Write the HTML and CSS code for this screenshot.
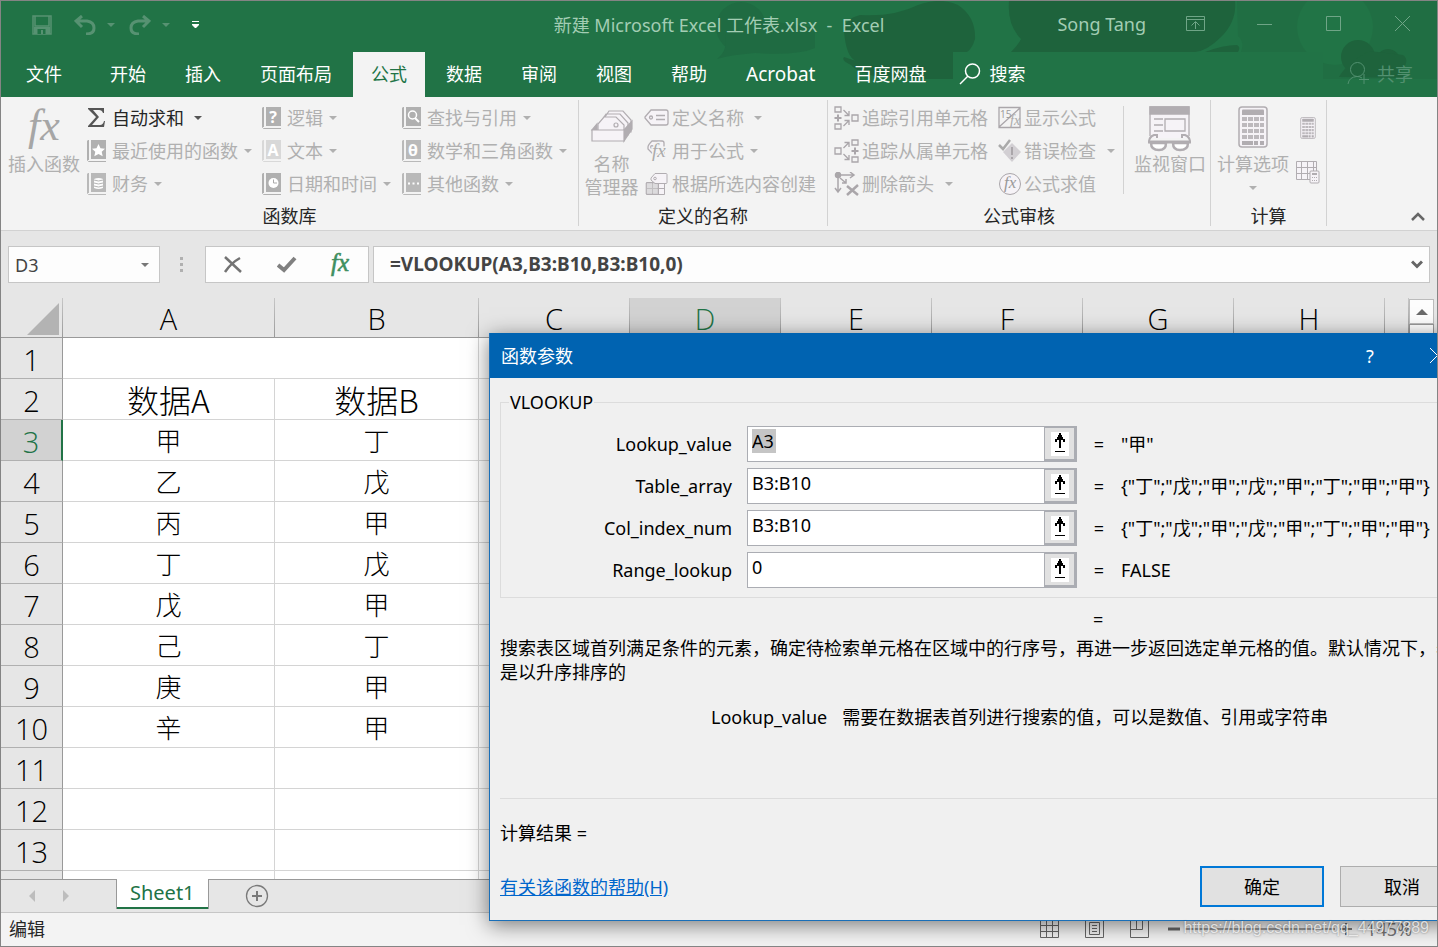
FILE: index.html
```html
<!DOCTYPE html>
<html lang="zh-CN">
<head>
<meta charset="utf-8">
<title>新建 Microsoft Excel 工作表.xlsx - Excel</title>
<link rel="stylesheet" href="styles.css">
</head>
<body>
<svg class="defs" aria-hidden="true">
  <symbol id="book" viewBox="0 0 20 22"><path d="M1 0h1v20H0V1zM4 0H19V19H4z" fill="currentColor"/><path d="M0.500 19v1.500l1 1H19" fill="none" stroke="currentColor"/></symbol>
  <symbol id="pick" viewBox="0 0 18 24"><path d="M0 0h18v24H0z" fill="#fff"/><path d="M8 1h2v2h1v2h1v2h2v3h-2V8h-2v8H8V8H6v2H4V7h2V5h1V3h1zM4 19h10v1H4z" fill="#000"/></symbol>
  <symbol id="calc" viewBox="0 0 30 42"><rect x="1" y="1" width="28" height="40" rx="3" fill="#f6f3f7" stroke="#b1adb1" stroke-width="1.500"/><path d="M4 4.500q0-1 1-1h20q1 0 1 1v4.500H4z" fill="#b1adb1"/><path d="M4 13h22M4 19h22M4 25h22M4 31h22" stroke="#bdb9bd" stroke-width="4" stroke-dasharray="5 1"/><path d="M4 37h11M16 37h4M22 37h4" stroke="#b1adb1" stroke-width="4"/></symbol>
</svg>
<div class="window">
  <header class="head">
    <svg class="pattern" viewBox="0 0 800 78" aria-hidden="true">
      <g fill="#1f6b42"><circle cx="104" cy="26" r="25"/><path d="M80 58q12-9 8-26l40-12q24 2 50 7v20q-18 8-60 5-26 2-38 6z"/></g>
      <g fill="#1e633c"><path d="M219 60q-10-4-12-30 0-12 16-16 34 2 58-10 22-8 40 0 18 12 17 34-3 10-8 13h-14v27h-60q-34-4-42-14-10-4-7-8z"/><path d="M372 0h226q2 20-14 36-14 14-26 15H374q8-8 10-13-14-14-12-38z"/><path d="M568 51q18-7 32-7 4 2 1 7z"/></g>
      <path d="M600 0h200v78H686V51H604q4-10-3-16z" fill="#206e43"/>
      <circle cx="698" cy="26" r="38" fill="#217446"/>
      <g fill="#1e633c"><circle cx="721" cy="56" r="17"/><circle cx="751" cy="60" r="12"/><path d="M702 76q7-13 30-26l34 4q8 6-3 17l6 6z"/></g>
      <path d="M317 51H686V78H317z" fill="#217346"/>
    </svg>
    <div class="titlebar">
      <div class="quick">
        <button aria-label="保存"><svg width="20" height="20" viewBox="0 0 20 20" fill="none" stroke="currentColor" stroke-width="1.500"><path d="M1 1h18v18H1zM3 1v10h14V1"/><path d="M2 12h16v7H2z" fill="currentColor" stroke="none"/><path d="M5.500 14h8v5h-8z" fill="#217346" stroke="none"/><path d="M9 15h2v4H9z" fill="currentColor" stroke="none"/></svg></button>
        <button aria-label="撤消"><svg width="22" height="20" viewBox="0 0 22 20" fill="none" stroke="currentColor" stroke-width="3"><path d="M8 1L2 6l6 6M2 6h11q7 1 7 7t-8 6"/></svg></button>
        <button aria-label="撤消选项"><i class="caret"></i></button>
        <button aria-label="恢复"><svg width="22" height="20" viewBox="0 0 22 20" fill="none" stroke="currentColor" stroke-width="3"><path d="M14 1l6 5-6 6M20 6H9q-7 1-7 7t8 6"/></svg></button>
        <button aria-label="恢复选项"><i class="caret"></i></button>
        <button class="bright" aria-label="自定义快速访问工具栏"><svg width="8" height="8" viewBox="0 0 8 8" fill="currentColor"><path d="M0 0h7v1H0zM0 3h7v1L4 7H3L0 4z"/></svg></button>
      </div>
      <h1 class="doc">新建 Microsoft Excel 工作表.xlsx&nbsp; -&nbsp; Excel</h1>
      <div class="winctl">
        <span class="user">Song Tang</span>
        <button aria-label="功能区显示选项"><svg width="20" height="16" viewBox="0 0 20 16" fill="none" stroke="currentColor"><path d="M.5.5h18v14H.500zM.5 3.500h18M9.500 13V6M5.500 9.500l4-4 4 4"/></svg></button>
        <button aria-label="最小化"><svg width="16" height="16" viewBox="0 0 16 16" stroke="currentColor"><path d="M0 8.500h15"/></svg></button>
        <button aria-label="最大化"><svg width="16" height="16" viewBox="0 0 16 16" fill="none" stroke="currentColor"><path d="M.5.5h14v14H.500z"/></svg></button>
        <button aria-label="关闭"><svg width="16" height="16" viewBox="0 0 16 16" stroke="currentColor"><path d="M0 0l15 15M15 0L0 15"/></svg></button>
      </div>
    </div>
    <nav class="tabs">
      <button class="file">文件</button><button>开始</button><button>插入</button><button>页面布局</button><button class="active">公式</button><button>数据</button><button>审阅</button><button>视图</button><button>帮助</button><button class="latin">Acrobat</button><button>百度网盘</button>
      <button class="search"><svg width="22" height="22" viewBox="0 0 22 22" fill="none" stroke="currentColor" stroke-width="1.500"><circle cx="13.500" cy="8" r="7"/><path d="M9 13l-8 8"/></svg>搜索</button>
      <button class="share"><svg width="23" height="23" viewBox="0 0 23 23" fill="none" stroke="currentColor"><circle cx="10.500" cy="7.500" r="7"/><path d="M1 22q1-7 9-7.500 3 0 5 1.500M17 12v10M12 17.500h10"/></svg>共享</button>
    </nav>
  </header>

  <section class="ribbon">
    <div class="group">
      <div class="tools library">
        <button class="big"><svg width="52" height="44" viewBox="0 0 52 44" fill="#a6a6a6"><text class="fx" x="10" y="34" font-size="44">fx</text></svg>插入函数</button>
        <div class="stack">
          <button class="on"><svg width="20" height="22" viewBox="0 0 20 22"><path d="M1 1h16v5h-1q-1-3-4-3H6l6 7-7 8h8q3 0 4-4h1l-1 6H1v-1l8-9-8-8z" fill="#555"/></svg>自动求和<i class="caret far"></i></button>
          <button><svg width="20" height="22"><use href="#book"/><path d="M11.500 4l2 4.200 4.500.500-3.300 3 1 4.500-4.200-2.300-4.200 2.300 1-4.500-3.300-3 4.500-.500z" fill="#fff"/></svg>最近使用的函数<i class="caret"></i></button>
          <button><svg width="20" height="22" opacity=".85"><use href="#book"/><path d="M7 6q4.500-2 9 0v9q-4.500 2-9 0z" fill="#fff"/><path d="M7 7q4.500 2 9 0M7 10q4.500 2 9 0M7 13q4.500 2 9 0" stroke="#aaa" fill="none"/></svg>财务<i class="caret"></i></button>
        </div>
        <div class="stack">
          <button><svg width="20" height="22"><use href="#book"/><text class="mark" x="11" y="16">?</text></svg>逻辑<i class="caret"></i></button>
          <button><svg width="20" height="22"><g opacity=".4"><use href="#book"/></g><text class="mark" x="11" y="16">A</text></svg>文本<i class="caret"></i></button>
          <button><svg width="20" height="22"><use href="#book"/><circle cx="11.500" cy="10" r="5" fill="#fff"/><path d="M11.500 6.500V10H15" stroke="#aaa" fill="none"/></svg>日期和时间<i class="caret"></i></button>
        </div>
        <div class="stack">
          <button><svg width="20" height="22"><use href="#book"/><circle cx="10.500" cy="8" r="4" fill="none" stroke="#fff" stroke-width="1.500"/><path d="M13 11l4 4" stroke="#fff" stroke-width="2"/></svg>查找与引用<i class="caret"></i></button>
          <button><svg width="20" height="22" opacity=".85"><use href="#book"/><text class="mark" x="11" y="16">θ</text></svg>数学和三角函数<i class="caret"></i></button>
          <button><svg width="20" height="22" opacity=".85"><use href="#book"/><path d="M6 10.500h2M10.500 10.500h2M15 10.500h2" stroke="#fff" stroke-width="2"/></svg>其他函数<i class="caret"></i></button>
        </div>
      </div>
      <div class="label">函数库</div>
    </div>

    <div class="group">
      <div class="tools names">
        <button class="big manager"><svg width="44" height="44" viewBox="0 0 44 44" fill="#f6f3f7" stroke="#b1adb1" stroke-width="1.200"><path d="M15 11l4-6h14l8 9v12H15zM12 14l4-6h14l8 9v12H12z"/><path d="M8 24V18l6-7h12l8 8v8H8z"/><circle cx="26" cy="19" r="2"/><path d="M2 24l5-6v6zM34 24l8-9v8l-8 12z" fill="#b1adb1"/><path d="M2 24h32v11H2z"/></svg><span>名称<br>管理器</span></button>
        <div class="stack">
          <button><svg width="26" height="22" viewBox="0 0 26 22" fill="#f6f3f7" stroke="#b1adb1" stroke-width="1.300"><path d="M1 10l6-7h15q2 0 2 2v11q0 2-2 2H7l-6-7z"/><circle cx="7" cy="10.500" r="1.500"/><path d="M12 8.500h9M12 12.500h9"/></svg>定义名称<i class="caret far"></i></button>
          <button><svg width="26" height="22" viewBox="0 0 26 22" fill="#f6f3f7" stroke="#b1adb1" stroke-width="1.300"><path d="M4 7q0-2 4-6h10q2 0 2 2v11H9L4 9z"/><circle cx="8" cy="7" r="1.300"/><text class="fx" x="8" y="17" font-size="19" fill="#aaa" stroke="#f3f3f3" stroke-width="3" paint-order="stroke">fx</text></svg>用于公式<i class="caret"></i></button>
          <button><svg width="26" height="22" viewBox="0 0 26 22" fill="#f6f3f7" stroke="#b1adb1"><path d="M2.500 9.500h18v12h-18zM2.500 15.500h18M8.500 9.500v12M14.500 9.500v12"/><path d="M2 10h12v11H2z" opacity=".6" fill="#ccc"/><path d="M7 5l4-4.500h11q1 0 1 1v8q0 1-1 1H11L7 7z"/><circle cx="11" cy="5.500" r="1.300"/></svg>根据所选内容创建</button>
        </div>
      </div>
      <div class="label">定义的名称</div>
    </div>

    <div class="group">
      <div class="tools audit">
        <div class="stack">
          <button><svg width="26" height="24" viewBox="0 0 26 24" fill="none" stroke="#aaa6aa" stroke-width="1.300"><path d="M1 1h6v5H1zM1 18h6v5H1zM18 9h6v6h-6z"/><path d="M4 8.500v7M.5 12h7" stroke-width="2"/><path d="M9.500 4l5 5M15 5v4.500h-4.500M9.500 20l5-5M15 19v-4.500h-4.500"/></svg>追踪引用单元格</button>
          <button><svg width="26" height="24" viewBox="0 0 26 24" fill="none" stroke="#aaa6aa" stroke-width="1.300"><path d="M1 9h6v6H1zM18 1h6v5h-6zM18 18h6v5h-6z"/><path d="M21 8.500v7M17.500 12h7" stroke-width="2"/><path d="M9.500 9l5-5M15 8V3.500h-4.500M9.500 15l5 5M15 16v4.500h-4.500"/></svg>追踪从属单元格</button>
          <button><svg width="26" height="24" viewBox="0 0 26 24" fill="none" stroke="#aaa6aa" stroke-width="1.500"><circle cx="4" cy="3" r="2.500" fill="#aaa"/><path d="M4 3h15M16 0l4 3-4 3M4 3v16M1 16l3 4 3-4M6 6l6 5M12 7v4H8"/><path d="M13 14l11 9M24 13L13 23" stroke-width="2.500"/></svg>删除箭头<i class="caret wide"></i></button>
        </div>
        <div class="stack">
          <button><svg width="24" height="24" viewBox="0 0 24 24" fill="none" stroke="#aaa6aa" stroke-width="1.300"><path d="M1 1.500h21v20H1zM1 21L22 2"/><text x="2" y="12" class="tiny">15</text><text class="fx" x="12" y="19" font-size="14" fill="#aaa" stroke="none">fx</text></svg>显示公式</button>
          <button><svg width="24" height="24" viewBox="0 0 24 24"><path d="M5 13l9-9 9 9-9 10z" fill="#d2cfd3"/><path d="M14 8v8M14 18v2" stroke="#aaa6aa" stroke-width="2"/><path d="M1 6l4 4 7-9" fill="none" stroke="#aaa" stroke-width="2.500"/></svg>错误检查<i class="caret wide"></i></button>
          <button><svg width="24" height="24" viewBox="0 0 24 24" fill="#f6f3f7" stroke="#aaa6aa"><circle cx="12" cy="12" r="10.500"/><text class="fx" x="6" y="16" font-size="17" fill="#999" stroke="none">fx</text></svg>公式求值</button>
        </div>
        <button class="big watch"><svg width="46" height="46" viewBox="0 0 46 46" fill="none" stroke="#b1adb1" stroke-width="1.300"><path d="M3 1h39v31H3z" fill="#f6f3f7" stroke="none"/><path d="M3 30V1h39v29"/><path d="M3 1h39v7H3z" fill="#b1adb1"/><path d="M7 13h9M7 19h9M7 25h9M18 13h20v12H18z"/><path d="M2 36q0-5 5-7h3v3M43 36q0-5-5-7h-3v3" stroke-width="2"/><path d="M1 36h43" stroke-width="3"/><path d="M4 37h15q0 7-7 7-8 0-8-7zM26 37h15q0 7-8 7-7 0-7-7z" fill="#fff" stroke-width="2.500"/></svg>监视窗口</button>
      </div>
      <div class="label">公式审核</div>
    </div>

    <div class="group">
      <div class="tools calcs">
        <button class="big"><svg width="30" height="44" viewBox="0 0 30 44"><use href="#calc" width="30" height="42"/></svg>计算选项<i class="caret down"></i></button>
        <div class="minis">
          <button aria-label="开始计算"><svg width="16" height="22"><use href="#calc"/></svg></button>
          <button aria-label="计算工作表"><svg width="24" height="24" viewBox="0 0 24 24" fill="#f6f3f7" stroke="#b1adb1"><path d="M.5 1.500h20v18H.500zM.5 7.500h20M.5 13.500h20M5.500 1.500v18M11.500 1.500v18M17.500 1.500v18"/><rect x="14" y="11" width="9" height="12" rx="1"/><path d="M16 14h5" stroke-width="2"/><path d="M16 17.500h5M16 20.500h5" stroke-dasharray="1 1"/></svg></button>
        </div>
      </div>
      <div class="label">计算</div>
    </div>
    <button class="fold" aria-label="折叠功能区"><svg width="14" height="10" viewBox="0 0 14 10" fill="none" stroke="#666" stroke-width="2.500"><path d="M1 8l6-6 6 6"/></svg></button>
  </section>

  <section class="formula">
    <div class="namebox"><input aria-label="名称框" value="D3"><button aria-label="名称列表"><i class="caret"></i></button></div>
    <svg width="4" height="16" viewBox="0 0 4 16" fill="#b0b0b0"><path d="M0 0h3v3H0zM0 6h3v3H0zM0 12h3v3H0z"/></svg>
    <div class="fxbtns">
      <button aria-label="取消"><svg width="20" height="18" viewBox="0 0 20 18" fill="none" stroke="#737373" stroke-width="2.500"><path d="M2 1l16 15M17 2q-9 5-15 14"/></svg></button>
      <button aria-label="输入"><svg width="20" height="18" viewBox="0 0 20 18" fill="none" stroke="#808080" stroke-width="4"><path d="M1 9l6 5L18 2"/></svg></button>
      <button aria-label="插入函数"><svg width="28" height="28" viewBox="0 0 28 28"><text class="fx" x="4" y="20" font-size="25" fill="#3f8f61" stroke="#3f8f61" stroke-width=".6">fx</text></svg></button>
    </div>
    <div class="bar"><input aria-label="编辑栏" value="=VLOOKUP(A3,B3:B10,B3:B10,0)"><button aria-label="展开编辑栏"><svg width="12" height="9" viewBox="0 0 12 9" fill="none" stroke="#666" stroke-width="3"><path d="M1 1.500l5 5 5-5"/></svg></button></div>
  </section>

  <main class="book">
    <table class="sheet">
      <colgroup><col class="c-num"><col class="c-a"><col class="c-b"><col class="c-n"><col class="c-n"><col class="c-n"><col class="c-n"><col class="c-n"><col class="c-n"><col></colgroup>
      <thead><tr><th class="corner"><svg width="32" height="32" viewBox="0 0 32 32"><path d="M32 0v32H0z" fill="#b3b3b3"/></svg></th><th>A</th><th>B</th><th>C</th><th class="sel">D</th><th>E</th><th>F</th><th>G</th><th>H</th><th></th></tr></thead>
      <tbody>
        <tr><th>1</th><td colspan="2"></td><td></td><td></td><td></td><td></td><td></td><td></td><td></td></tr>
        <tr><th>2</th><td class="cap">数据A</td><td class="cap">数据B</td><td></td><td></td><td></td><td></td><td></td><td></td><td></td></tr>
        <tr><th class="sel">3</th><td>甲</td><td>丁</td><td></td><td></td><td></td><td></td><td></td><td></td><td></td></tr>
        <tr><th>4</th><td>乙</td><td>戊</td><td></td><td></td><td></td><td></td><td></td><td></td><td></td></tr>
        <tr><th>5</th><td>丙</td><td>甲</td><td></td><td></td><td></td><td></td><td></td><td></td><td></td></tr>
        <tr><th>6</th><td>丁</td><td>戊</td><td></td><td></td><td></td><td></td><td></td><td></td><td></td></tr>
        <tr><th>7</th><td>戊</td><td>甲</td><td></td><td></td><td></td><td></td><td></td><td></td><td></td></tr>
        <tr><th>8</th><td>己</td><td>丁</td><td></td><td></td><td></td><td></td><td></td><td></td><td></td></tr>
        <tr><th>9</th><td>庚</td><td>甲</td><td></td><td></td><td></td><td></td><td></td><td></td><td></td></tr>
        <tr><th>10</th><td>辛</td><td>甲</td><td></td><td></td><td></td><td></td><td></td><td></td><td></td></tr>
        <tr><th>11</th><td></td><td></td><td></td><td></td><td></td><td></td><td></td><td></td><td></td></tr>
        <tr><th>12</th><td></td><td></td><td></td><td></td><td></td><td></td><td></td><td></td><td></td></tr>
        <tr><th>13</th><td></td><td></td><td></td><td></td><td></td><td></td><td></td><td></td><td></td></tr>
        <tr><th></th><td></td><td></td><td></td><td></td><td></td><td></td><td></td><td></td><td></td></tr>
      </tbody>
    </table>
    <div class="vscroll"><button aria-label="向上滚动"><svg width="12" height="6" viewBox="0 0 12 6"><path d="M6 0l6 6H0z" fill="#6a6a6a"/></svg></button><div class="thumb"></div></div>
  </main>

  <div class="sheets">
    <button class="arrow" aria-label="上一个"><svg width="6" height="12" viewBox="0 0 6 12"><path d="M6 0v12L0 6z" fill="#bdbdbd"/></svg></button>
    <button class="arrow" aria-label="下一个"><svg width="6" height="12" viewBox="0 0 6 12"><path d="M0 0v12l6-6z" fill="#bdbdbd"/></svg></button>
    <button class="sheettab">Sheet1</button>
    <button class="add" aria-label="新工作表"><svg width="24" height="24" viewBox="0 0 24 24" fill="none" stroke="#7a7a7a"><circle cx="12" cy="12" r="10.500" stroke-width="1.300"/><path d="M12 7v10M7 12h10" stroke-width="2"/></svg></button>
  </div>

  <footer class="status">
    <span>编辑</span>
    <div class="views">
      <button aria-label="普通"><svg width="19" height="19" viewBox="0 0 19 19" fill="none" stroke="#666"><path d="M.5.5h18v18H.500zM.5 6.500h18M.5 12.500h18M6.500.5v18M12.500.5v18"/></svg></button>
      <button aria-label="页面布局"><svg width="19" height="19" viewBox="0 0 19 19" fill="none" stroke="#666"><path d="M.5.5h18v18H.500zM4.500 3.500h10v12h-10zM7 6.500h5M7 9.500h5M7 12.500h5"/></svg></button>
      <button aria-label="分页预览"><svg width="19" height="19" viewBox="0 0 19 19" fill="none" stroke="#666"><path d="M.5.5h18v18H.500zM.5 10.500h12v-10M6.500.5v10"/></svg></button>
    </div>
    <div class="zoom"><button aria-label="缩小"><svg width="12" height="12"><path d="M0 6h12" stroke="#666" stroke-width="3"/></svg></button><input type="range" aria-label="缩放" min="10" max="400" value="145"><button aria-label="放大"><svg width="12" height="12"><path d="M0 6h12M6 0v12" stroke="#777" stroke-width="2"/></svg></button><span>145%</span></div>
  </footer>

  <div class="dialog" role="dialog" aria-labelledby="dlg">
    <div class="dtitle"><h2 id="dlg">函数参数</h2><button aria-label="帮助">?</button><button aria-label="关闭"><svg width="16" height="16" viewBox="0 0 16 16" stroke="#fff"><path d="M0 0l15 15M15 0L0 15"/></svg></button></div>
    <div class="dbody">
      <fieldset>
        <legend>VLOOKUP</legend>
        <div class="field"><label for="f1">Lookup_value</label><div class="ref"><input id="f1" class="marked" value="A3"><button aria-label="选择区域"><svg width="18" height="24"><use href="#pick"/></svg></button></div><span>=</span><output>"甲"</output></div>
        <div class="field"><label for="f2">Table_array</label><div class="ref"><input id="f2" value="B3:B10"><button aria-label="选择区域"><svg width="18" height="24"><use href="#pick"/></svg></button></div><span>=</span><output>{"丁";"戊";"甲";"戊";"甲";"丁";"甲";"甲"}</output></div>
        <div class="field"><label for="f3">Col_index_num</label><div class="ref"><input id="f3" value="B3:B10"><button aria-label="选择区域"><svg width="18" height="24"><use href="#pick"/></svg></button></div><span>=</span><output>{"丁";"戊";"甲";"戊";"甲";"丁";"甲";"甲"}</output></div>
        <div class="field"><label for="f4">Range_lookup</label><div class="ref"><input id="f4" value="0"><button aria-label="选择区域"><svg width="18" height="24"><use href="#pick"/></svg></button></div><span>=</span><output>FALSE</output></div>
      </fieldset>
      <div class="eq">=</div>
      <p class="desc">搜索表区域首列满足条件的元素，确定待检索单元格在区域中的行序号，再进一步返回选定单元格的值。默认情况下，表是以升序排序的</p>
      <div class="arg"><span>Lookup_value</span><span>需要在数据表首列进行搜索的值，可以是数值、引用或字符串</span></div>
      <div class="result">计算结果 =</div>
      <div class="actions"><a href="#help">有关该函数的帮助(H)</a><button class="ok">确定</button><button>取消</button></div>
    </div>
  </div>
  <div class="watermark">https://blog.csdn.net/qq_44977889</div>
</div>
</body>
</html>
```

FILE: styles.css
```css
* { box-sizing: border-box; }
body { margin: 0; font: 18px/24px "Noto Sans", "Noto Sans CJK SC", sans-serif; color: #262626; }
button, input { font: inherit; color: inherit; border: 0; padding: 0; margin: 0; background: none; border-radius: 0; outline: 0; }
button { display: flex; align-items: center; white-space: nowrap; }
h1, h2, p { margin: 0; font-size: 18px; font-weight: 400; }
svg { display: block; flex: none; }
.defs { position: absolute; width: 0; height: 0; }
.fx { font-family: "Liberation Serif", serif; font-style: italic; }
.mark { font: bold 16px "Open Sans", sans-serif; fill: #fff; text-anchor: middle; }
.tiny { font: 10px "Open Sans", sans-serif; fill: #999; stroke: none; }
.caret { flex: none; border: 4px solid transparent; border-top-color: currentColor; border-bottom: 0; margin-left: 6px; }

.window { position: relative; display: flex; flex-direction: column; height: 100vh; overflow: hidden; border: 1px solid #848484; background: #e6e6e6; }

.head { position: relative; background: #217346; color: #fff; }
.pattern { position: absolute; right: 0; top: 0; width: 800px; height: 78px; }
.titlebar { position: relative; display: grid; grid-template-columns: 1fr auto 1fr; align-items: center; height: 51px; padding-bottom: 4px; }
.quick { display: flex; align-items: center; padding-left: 31px; color: #579272; }
.quick button + button { margin-left: 22px; }
.quick button:nth-child(3), .quick button:nth-child(5) { margin-left: 5px; }
.quick button:nth-child(4) { margin-left: 14px; }
.quick .bright { color: #fff; }
.doc { color: #a3cdb4; white-space: nowrap; }
.winctl { display: flex; justify-content: flex-end; padding-bottom: 2px; color: #6fa587; }
.winctl button { width: 69px; height: 44px; justify-content: center; }
.user { align-self: center; margin-right: 15px; color: #a3cdb4; }
.tabs { position: relative; display: flex; gap: 3px; height: 45px; }
.tabs button { padding: 0 18px 2px; }
.tabs .file { padding: 0 27px 2px 25px; }
.tabs .active { background: #f3f3f3; color: #217346; }
.tabs .latin { font-size: 19px; }
.tabs .search { padding: 0 12px 2px; gap: 8px; }
.tabs .share { margin-left: auto; padding: 0 24px 2px; gap: 7px; color: #529170; }

.ribbon { display: flex; background: #f3f3f3; border-bottom: 1px solid #d2d2d2; color: #b0b0b0; }
.group { padding-top: 4px; border-right: 1px solid; border-image: linear-gradient(#f3f3f3 4px, #d2d2d2 4px, #d2d2d2 128px, #f3f3f3 128px) 1; }
.tools { display: grid; height: 99px; }
.library { grid-template-columns: 86px 175px 140px 176px; }
.names { grid-template-columns: 65px 183px; }
.audit { grid-template-columns: 164px 125px 87px; padding-left: 6px; }
.calcs { grid-template-columns: 84px 31px; }
.stack { display: grid; grid-template-rows: repeat(3, 33px); }
.stack button { gap: 5px; }
.stack .caret { margin-left: 1px; }
.stack .far { margin-left: 5px; }
.names .stack button { gap: 2px; }
.names .stack .caret { margin-left: 4px; }
.names .stack .far { margin-left: 8px; }
.audit .stack button { gap: 2px; }
.audit .stack .wide { margin-left: 9px; }
.stack .on { color: #262626; }
.stack .on .caret { color: #555; }
.big { flex-direction: column; justify-content: flex-start; padding-top: 5px; gap: 2px; }
.manager { gap: 3px; line-height: 23px; }
.audit .watch { height: 88px; margin-top: 5px; padding: 0 0 0 6px; gap: 0; border-left: 1px solid #d2d2d2; }
.down { margin: 8px 0 0; }
.minis { display: flex; flex-direction: column; align-items: center; gap: 21px; padding: 16px 6px 0 0; }
.label { height: 30px; line-height: 32px; text-align: center; color: #262626; }
.fold { align-self: flex-end; margin: 0 12px 8px auto; }

.formula { display: flex; align-items: center; height: 67px; padding: 0 7px; color: #444; }
.namebox, .fxbtns, .bar { display: flex; height: 37px; background: #fdfdfd; border: 1px solid #c6c6c6; }
.namebox { width: 152px; margin-right: 20px; }
.namebox input { flex: 1; min-width: 0; padding-left: 6px; }
.namebox button { padding-right: 10px; color: #777; }
.fxbtns { width: 164px; margin: 0 4px 0 21px; }
.fxbtns button { flex: 1; justify-content: center; }
.bar { flex: 1; }
.bar input { flex: 1; padding: 0 0 2px 16px; font-size: 19px; font-weight: 700; }
.bar button { padding-right: 6px; }

.book { flex: 1; display: flex; min-height: 0; overflow: hidden; }
.sheet { flex: 1; width: 0; table-layout: fixed; border-collapse: separate; border-spacing: 0; align-self: flex-start; }
.c-num { width: 62px; }
.c-a { width: 212px; }
.c-b { width: 204px; }
.c-n { width: 151px; }
.sheet th { height: 41px; padding: 3px 0 0; font: 350 29px/37px "Open Sans", sans-serif; color: #000; background: #e6e6e6; border-right: 1px solid #b5b5b5; border-bottom: 1px solid #999; }
.sheet thead th { height: 40px; line-height: 36px; border-image: linear-gradient(#c8c8c8, #999) 1; }
.sheet tbody th { border-right-color: #999; border-bottom-color: #b0b0b0; }
.sheet .corner svg { margin: 0 3px 0 auto; }
.sheet th.sel { background: #d2d2d2; color: #217346; }
.sheet tbody th.sel { border-right: 2px solid #217346; }
.sheet td { height: 41px; padding: 0; font: 300 26px/40px "Noto Sans CJK SC", sans-serif; color: #000; text-align: center; background: #fff; border-right: 1px solid #d4d4d4; border-bottom: 1px solid #d4d4d4; }
.sheet .cap { font-size: 32px; }
.vscroll { width: 28px; padding: 1px 3px 0 0; }
.vscroll button { width: 25px; height: 25px; justify-content: center; background: #fdfdfd; border: 1px solid #bbb; }
.thumb { width: 25px; height: 200px; background: #fff; border: 1px solid #999; }

.sheets { display: flex; height: 34px; border-top: 1px solid #999; border-bottom: 1px solid #c6c6c6; align-items: center; }
.arrow { margin-left: 28px; }
.sheettab { align-self: flex-start; height: 30px; margin: -1px 36px 0 47px; padding: 0 13px 3px; background: #fff; color: #217346; border: solid #999; border-width: 0 1px; box-shadow: inset 0 -2px #217346; font-size: 20px; }
.status { display: flex; align-items: center; height: 33px; padding: 0 25px 2px 8px; background: #f3f3f3; }
.views { display: flex; gap: 26px; margin-left: auto; }
.zoom { display: flex; align-items: center; margin-left: 19px; color: #777; }
.zoom input { appearance: none; width: 150px; height: 2px; margin: 0 5px; background: #999; }
.zoom input::-webkit-slider-thumb { appearance: none; width: 1px; height: 2px; background: #999; }
.zoom span { margin-left: 14px; }

.dialog { position: absolute; left: 488px; top: 332px; width: 988px; background: #f0f0f0; color: #000; border: 1px solid #1a6fb8; border-top: 0; box-shadow: 0 4px 20px rgba(0, 0, 0, .5); }
.dtitle { display: flex; align-items: center; height: 45px; padding: 0 4px 0 11px; background: #0063b1; color: #fff; }
.dtitle button { width: 68px; height: 45px; justify-content: center; }
.dtitle h2 { margin-right: auto; }
.dbody { padding: 12px 12px 13px 10px; }
fieldset { min-width: 0; margin: 0; padding: 12px 0 9px; border: 1px solid #dcdcdc; }
legend { margin-left: 8px; padding: 0 1px; }
.field { display: grid; grid-template-columns: 231px 330px 14px 1fr; column-gap: 15px; align-items: center; height: 36px; white-space: nowrap; }
.field + .field { margin-top: 6px; }
.field label { text-align: right; }
.field span { text-align: center; }
.ref { display: flex; height: 36px; background: #fff; border: 1px solid #abadb3; }
.ref input { flex: 1; min-width: 0; padding: 0 0 6px 4px; }
.ref .marked { background: linear-gradient(#c5c5c5, #c5c5c5) 4px 2px / 24px 24px no-repeat; }
.ref button { width: 32px; justify-content: center; background: #e1e1e1; border: solid #abadb3; border-width: 1px 2px 2px 1px; }
.eq { padding: 9px 0 0 593px; }
.desc { margin-top: 5px; }
.arg { display: flex; gap: 15px; padding: 21px 0 69px 211px; border-bottom: 1px solid #dcdcdc; }
.result { margin-top: 22px; }
.actions { display: flex; align-items: center; gap: 16px; margin-top: 21px; }
.actions a { margin-right: auto; color: #0066cc; }
.actions button { width: 124px; height: 41px; justify-content: center; background: #e1e1e1; border: 1px solid #adadad; }
.actions .ok { border: 2px solid #0078d7; }
.watermark { position: absolute; right: 8px; bottom: 6px; font: 16px/24px "Liberation Sans", sans-serif; color: rgba(255, 255, 255, .75); text-shadow: 0 0 2px rgba(0, 0, 0, .45); pointer-events: none; }
```
